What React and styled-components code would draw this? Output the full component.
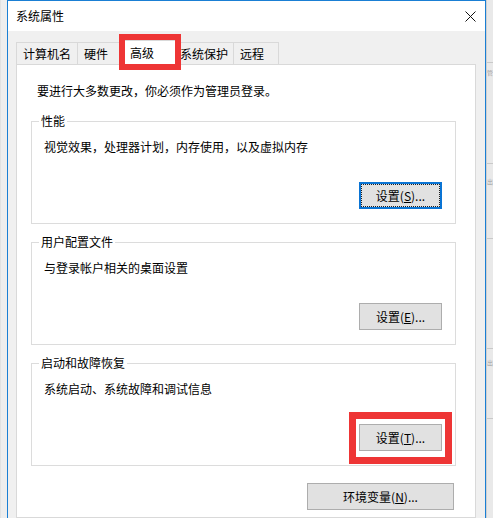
import React from "react";
import styled, { createGlobalStyle } from "styled-components";

const Global = createGlobalStyle`
  html, body { margin: 0; padding: 0; }
  body {
    width: 493px; height: 518px; overflow: hidden;
    font-family: "Noto Sans CJK SC", "Microsoft YaHei", sans-serif;
    font-size: 12px; color: #1a1a1a; background: #ececec;
  }
  * { box-sizing: border-box; }
`;

const Desktop = styled.div`
  display: flex;
  width: 493px;
  height: 518px;
  overflow: hidden;
`;

const LeftStrip = styled.div`
  width: 7px;
  flex: none;
  background: #eeeeee;
  border-left: 1px solid #e2e2e2;
`;

const RightStrip = styled.div`
  flex: 1;
  display: flex;
  flex-direction: column;
  background: #e9e9e9;
  border-left: 1px solid #d0d0d0;
  overflow: hidden;
`;

const StripCell = styled.div`
  height: ${(p) => p.h}px;
  flex: none;
  border-top: ${(p) => (p.line ? "1px solid #c9c9c9" : "none")};
  color: #a0a0a0;
  font-size: 6px;
  line-height: 8px;
  padding-top: ${(p) => p.pt || 0}px;
  white-space: nowrap;
`;

const Window = styled.div`
  width: 479px;
  flex: none;
  display: flex;
  flex-direction: column;
  border: 1px solid #1a7fd4;
  border-bottom: none;
  background: #f0f0f0;
`;

const TitleBar = styled.div`
  height: 30px;
  flex: none;
  display: flex;
  align-items: center;
  justify-content: space-between;
  background: #ffffff;
  padding: 0 9px 0 8px;
`;

const Title = styled.span`
  font-size: 12px;
  line-height: 16px;
  color: #000;
`;

const CloseIcon = styled.svg`
  width: 11px;
  height: 11px;
  display: block;
`;

const Body = styled.div`
  flex: 1;
  display: flex;
  flex-direction: column;
  padding: 11px 9px 0 8px;
`;

const TabStrip = styled.div`
  display: flex;
  align-items: flex-end;
  height: 22px;
  position: relative;
  z-index: 1;
`;

const Tab = styled.div`
  position: relative;
  width: ${(p) => p.w}px;
  height: ${(p) => (p.active ? 25 : 22)}px;
  margin-bottom: ${(p) => (p.active ? -1 : 0)}px;
  padding-left: ${(p) => p.pad}px;
  line-height: ${(p) => (p.active ? 24 : 22)}px;
  background: ${(p) => (p.active ? "#ffffff" : "#f0f0f0")};
  border: 1px solid #d9d9d9;
  border-bottom: none;
  border-right: ${(p) => (p.last ? "1px solid #d9d9d9" : "none")};
  white-space: nowrap;
  color: #000;
`;

const Highlight = styled.div`
  position: absolute;
  left: ${(p) => p.l}px;
  top: ${(p) => p.t}px;
  right: ${(p) => p.r}px;
  bottom: ${(p) => p.b}px;
  border: ${(p) => p.bw || 6}px solid #ee3535;
  pointer-events: none;
  z-index: 2;
`;

const Panel = styled.div`
  flex: 1;
  background: #ffffff;
  border: 1px solid #d9d9d9;
  padding: 18px 0 0 14px;
  display: flex;
  flex-direction: column;
`;

const Info = styled.div`
  line-height: 16px;
  padding-left: 6px;
  margin-bottom: 14px;
  color: #000;
`;

const Groups = styled.div`
  display: flex;
  flex-direction: column;
  gap: 10px;
  width: 425px;
`;

const Group = styled.fieldset`
  margin: 0;
  padding: 0 0 14px 0;
  border: 1px solid #dcdcdc;
  min-width: 0;
  display: flex;
  flex-direction: column;
`;

const Legend = styled.legend`
  margin-left: 7px;
  padding: 0 2px;
  line-height: 16px;
  font-size: 12px;
  color: #000;
`;

const Desc = styled.div`
  margin-top: 10px;
  padding-left: 12px;
  line-height: 16px;
  color: #000;
`;

const ButtonRow = styled.div`
  display: flex;
  justify-content: flex-end;
  width: ${(p) => (p.full ? "425px" : "auto")};
  margin-top: ${(p) => p.mt}px;
  padding-right: ${(p) => p.pr}px;
`;

const ButtonWrap = styled.div`
  position: relative;
  display: flex;
`;

const Button = styled.button`
  width: ${(p) => p.w}px;
  height: 27px;
  padding: 0;
  margin: 0;
  font-family: "Noto Sans CJK SC", "Microsoft YaHei", sans-serif;
  font-size: 12px;
  line-height: 16px;
  color: #000;
  background: #e1e1e1;
  border: ${(p) => (p.focused ? "2px solid #0a74d4" : "1px solid #adadad")};
  outline: ${(p) => (p.focused ? "1px dotted #202020" : "none")};
  outline-offset: -3px;
  text-align: center;
  u { text-decoration: underline; text-underline-offset: 1px; }
`;

export default function App() {
  return (
    <>
      <Global />
      <Desktop>
        <LeftStrip />
        <Window>
          <TitleBar>
            <Title>系统属性</Title>
            <CloseIcon viewBox="0 0 11 11">
              <path d="M0.5 0.5 L10.5 10.5 M10.5 0.5 L0.5 10.5" stroke="#111" strokeWidth="1" fill="none" />
            </CloseIcon>
          </TitleBar>
          <Body>
            <TabStrip>
              <Tab w={61} pad={6}>计算机名</Tab>
              <Tab w={42} pad={6}>硬件</Tab>
              <Tab w={57} pad={10} active>
                高级
                <Highlight l={-1} t={-7} r={-5} b={-5} />
              </Tab>
              <Tab w={57} pad={3}>系统保护</Tab>
              <Tab w={46} pad={6} last>远程</Tab>
            </TabStrip>
            <Panel>
              <Info>要进行大多数更改，你必须作为管理员登录。</Info>
              <Groups>
                <Group>
                  <Legend>性能</Legend>
                  <Desc>视觉效果，处理器计划，内存使用，以及虚拟内存</Desc>
                  <ButtonRow mt={27} pr={13}>
                    <Button w={83} focused>设置(<u>S</u>)...</Button>
                  </ButtonRow>
                </Group>
                <Group>
                  <Legend>用户配置文件</Legend>
                  <Desc>与登录帐户相关的桌面设置</Desc>
                  <ButtonRow mt={27} pr={13}>
                    <Button w={83}>设置(<u>E</u>)...</Button>
                  </ButtonRow>
                </Group>
                <Group>
                  <Legend>启动和故障恢复</Legend>
                  <Desc>系统启动、系统故障和调试信息</Desc>
                  <ButtonRow mt={27} pr={13}>
                    <ButtonWrap>
                      <Button w={83}>设置(<u>T</u>)...</Button>
                      <Highlight l={-10} t={-12} r={-10} b={-13} bw={7} />
                    </ButtonWrap>
                  </ButtonRow>
                </Group>
              </Groups>
              <ButtonRow full mt={17} pr={2}>
                <Button w={147}>环境变量(<u>N</u>)...</Button>
              </ButtonRow>
            </Panel>
          </Body>
        </Window>
        <RightStrip>
          <StripCell h={62} />
          <StripCell h={101} line pt={6}>管</StripCell>
          <StripCell h={75} line pt={14}>出</StripCell>
          <StripCell h={110} line />
          <StripCell h={70} line pt={10}>出</StripCell>
          <StripCell h={100} line />
        </RightStrip>
      </Desktop>
    </>
  );
}
